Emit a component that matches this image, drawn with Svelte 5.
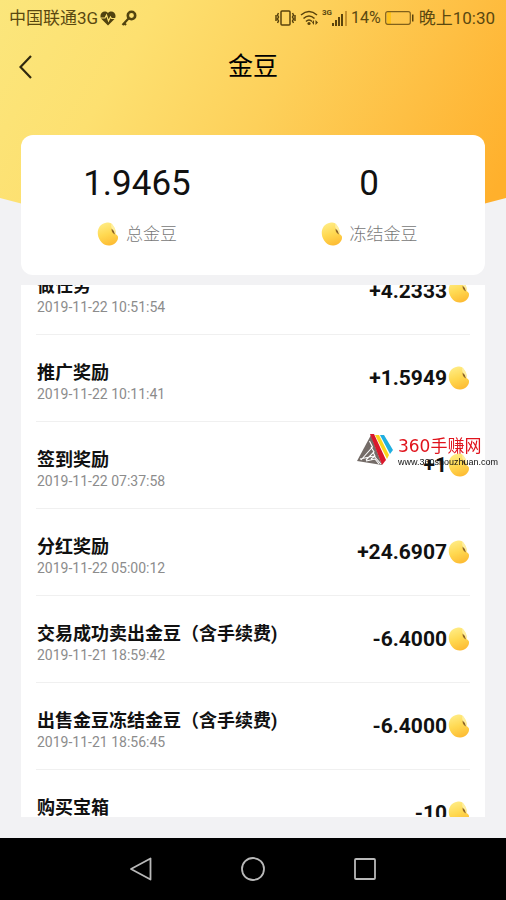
<script>
  const totals = [
    { value: "1.9465", label: "总金豆" },
    { value: "0", label: "冻结金豆" },
  ];

  const records = [
    { title: "做任务", time: "2019-11-22 10:51:54", amount: "+4.2333" },
    { title: "推广奖励", time: "2019-11-22 10:11:41", amount: "+1.5949" },
    { title: "签到奖励", time: "2019-11-22 07:37:58", amount: "+1" },
    { title: "分红奖励", time: "2019-11-22 05:00:12", amount: "+24.6907" },
    {
      title: "交易成功卖出金豆（含手续费)",
      time: "2019-11-21 18:59:42",
      amount: "-6.4000",
    },
    {
      title: "出售金豆冻结金豆（含手续费)",
      time: "2019-11-21 18:56:45",
      amount: "-6.4000",
    },
    { title: "购买宝箱", amount: "-10" },
  ];

  let list;

  // the list opens a little way down
  $effect(() => {
    list.scrollTop = 37;
  });
</script>

{#snippet bean()}
  <svg class="bean" viewBox="0 0 22 24" aria-hidden="true">
    <defs>
      <linearGradient id="beanFill" x1="0.3" y1="0" x2="0.6" y2="1">
        <stop offset="0" stop-color="#ffec86" />
        <stop offset="0.5" stop-color="#ffd951" />
        <stop offset="1" stop-color="#fdbb33" />
      </linearGradient>
    </defs>
    <path
      d="M9 .8C12 0 15 1 16 3.500C18 6 19 9 18.500 12C20 13 21.500 14 21 16C21 19 17 23.500 12.500 23.500C7 24 1.500 19 .8 12C.3 6 4 1.500 9 .8Z"
      fill="url(#beanFill)"
    />
    <path
      d="M14 2C17 3 19 8 18.500 12C15.500 11 14.500 8 14 2Z"
      fill="#fff3ae"
      opacity="0.800"
    />
    <path
      d="M14.500 6.500Q14.500 11 18 12.500Q17.500 8.500 14.500 6.500Z"
      fill="#8d6428"
    />
  </svg>
{/snippet}

<div class="page">
  <header>
    <div class="status">
      <span>中国联通3G</span>
      <svg class="heart" width="16" height="15" viewBox="0 0 16 15">
        <path
          d="M8 14.500L1.500 8C-2 3 4-2 8 2C12-2 18 3 14.500 8Z"
          fill="#51430f"
        />
        <path
          d="M1 7H5L6.500 4L8.500 10L10.500 6L11.500 7.500H15"
          fill="none"
          stroke="#fbe070"
          stroke-width="1.200"
        />
      </svg>
      <svg class="key" width="16" height="17" viewBox="0 0 16 17">
        <circle
          cx="10.500"
          cy="5.500"
          r="3.700"
          fill="none"
          stroke="#51430f"
          stroke-width="2.600"
        />
        <path
          d="M8 8L1.500 15M3 13L5 15"
          fill="none"
          stroke="#51430f"
          stroke-width="2.200"
        />
      </svg>
      <span class="fill"></span>
      <svg width="21" height="16" viewBox="0 0 21 16">
        <g fill="none" stroke="#5a430c" stroke-width="1.500">
          <rect x="6" y="1" width="9" height="14" rx="1" />
          <path
            d="M3.500 3L2.500 5L3.500 7L2.500 9L3.500 11L2.500 13M1 5V11M17.500 3L18.500 5L17.500 7L18.500 9L17.500 11L18.500 13M20 5V11"
          />
        </g>
      </svg>
      <svg class="wifi" width="19" height="16" viewBox="0 0 19 16">
        <g fill="none" stroke="#5a430c" stroke-width="1.600">
          <path d="M1 5Q9-2 17 5M3.500 8.500Q9 3.500 14.500 8.500M6 11.500Q9 8.500 12 11.500" />
        </g>
        <circle cx="9" cy="13.500" r="1.600" fill="#5a430c" />
        <path d="M14 10V15L12 12.500ZM15.500 10V15L18 12.500Z" fill="#5a430c" />
      </svg>
      <span class="cell">3G</span>
      <svg class="signal" width="16" height="15" viewBox="0 0 16 15">
        <path
          d="M0 12H2V15H0ZM3 9H5V15H3ZM6 6H8V15H6ZM9 3H11V15H9Z"
          fill="#5a430c"
        />
        <path d="M13 0H15V15H13Z" fill="#c8942f" />
      </svg>
      <span class="percent">14%</span>
      <svg class="battery" width="29" height="14" viewBox="0 0 29 14">
        <rect x="2" y="1" width="4" height="12" fill="#ffc21d" />
        <rect
          x="0.700"
          y="0.700"
          width="24.600"
          height="12.600"
          rx="2"
          fill="none"
          stroke="#80601b"
          stroke-width="1.200"
        />
        <path d="M27 3.500H28.500V10.500H27Z" fill="#5a430c" />
      </svg>
      <span>晚上10:30</span>
    </div>
    <div class="bar">
      <button class="back" aria-label="返回">
        <svg width="14" height="24" viewBox="0 0 14 24">
          <path
            d="M12 1L1.500 12L12 23"
            fill="none"
            stroke="#30290f"
            stroke-width="2.200"
          />
        </svg>
      </button>
      <h1>金豆</h1>
    </div>
  </header>

  <section class="card">
    {#each totals as total}
      <div class="total">
        <strong>{total.value}</strong>
        <span class="label">{@render bean()}{total.label}</span>
      </div>
    {/each}
  </section>

  <ul class="list" bind:this={list}>
    {#each records as record}
      <li>
        <div>
          <h2>{record.title}</h2>
          {#if record.time}
            <time>{record.time}</time>
          {/if}
        </div>
        <span class="amount">{record.amount}{@render bean()}</span>
      </li>
    {/each}
  </ul>

  <nav>
    <button aria-label="返回">
      <svg width="24" height="24" viewBox="0 0 24 24">
        <path d="M21.500 1.500V22.500L2 12Z" />
      </svg>
    </button>
    <button aria-label="主页">
      <svg width="24" height="24" viewBox="0 0 24 24">
        <circle cx="12" cy="12" r="11" />
      </svg>
    </button>
    <button aria-label="最近">
      <svg width="24" height="24" viewBox="0 0 24 24">
        <rect x="2" y="2" width="20" height="20" rx="1" />
      </svg>
    </button>
  </nav>

  <div class="mark">
    <svg width="36" height="32" viewBox="0 0 36 32">
      <path d="M14 1L0 27L25 31Z" fill="#746c68" />
      <path
        d="M12.500 7L15.500 13L4 26M14 13L17 18L9 26M16 18L18 22L14 25M3 25L17 22L24 30M9 27L18 25L22 30"
        fill="none"
        stroke="#fff"
        stroke-width="1.100"
      />
      <path d="M13 0H17L29 26L25 31Z" fill="#d9182b" />
      <path d="M18 1H22L32 21L30 25Z" fill="#fbd51c" />
      <path d="M23 1H27L36 16L33 20Z" fill="#20afe0" />
    </svg>
    <div>
      <p class="name">360手赚网</p>
      <p class="site">www.360shouzhuan.com</p>
    </div>
  </div>
</div>

<style>
  :global(body) {
    margin: 0;
  }
  .page {
    position: relative;
    display: flex;
    flex-direction: column;
    height: 100vh;
    overflow: hidden;
    background: #f2f2f4;
    color: #111;
    font-family: Roboto, "Noto Sans CJK SC", sans-serif;
  }
  header {
    flex: none;
    height: 264px;
    background: linear-gradient(
      120deg,
      #fbe67c 0%,
      #fde070 24%,
      #fdd05a 50%,
      #febf43 72%,
      #ffb02c 92%
    );
    clip-path: polygon(0 0, 100% 0, 100% 198px, 50% 100%, 0 198px);
  }
  .status {
    display: flex;
    align-items: center;
    height: 36px;
    padding: 0 11px 0 9px;
    color: #5a4810;
    font-size: 17px;
    line-height: 36px;
    white-space: nowrap;
  }
  .heart {
    margin-left: 2px;
  }
  .key {
    margin-left: 5px;
  }
  .fill {
    flex: 1;
  }
  .wifi {
    margin-left: 4px;
  }
  .cell {
    align-self: flex-start;
    margin-left: 3px;
    font-size: 8px;
    font-weight: 700;
    line-height: 26px;
  }
  .percent {
    margin-left: 3px;
    font-size: 16px;
  }
  .battery {
    margin: 0 5px 0 4px;
  }
  .bar {
    display: grid;
    grid-template-columns: 52px 1fr 52px;
    align-items: center;
    height: 60px;
  }
  button {
    display: flex;
    align-items: center;
    justify-content: center;
    padding: 0;
    border: 0;
    background: none;
  }
  .back {
    height: 56px;
  }
  h1 {
    margin: 0;
    color: #000;
    font-size: 25px;
    font-weight: 400;
    line-height: 62px;
    text-align: center;
  }
  .card {
    position: relative;
    flex: none;
    display: grid;
    grid-template-columns: 1fr 1fr;
    height: 140px;
    margin: -129px 21px 10px;
    border-radius: 12px;
    background: #fff;
  }
  .total {
    display: flex;
    flex-direction: column;
    align-items: center;
    padding-top: 28px;
  }
  .total strong {
    font-size: 35px;
    font-weight: 400;
    line-height: 42px;
  }
  .label {
    display: flex;
    align-items: center;
    gap: 7px;
    margin-top: 17px;
    color: #777;
    font-size: 17px;
    font-weight: 300;
    line-height: 24px;
  }
  .bean {
    flex: none;
    width: 22px;
    height: 24px;
  }
  .list {
    flex: 1;
    min-height: 0;
    margin: 0 21px 21px;
    padding: 0 15px;
    overflow-y: auto;
    scrollbar-width: none;
    background: #fff;
    list-style: none;
  }
  li {
    display: flex;
    justify-content: space-between;
    box-sizing: border-box;
    height: 87px;
    padding-left: 1px;
    border-bottom: 1px solid #f0f0f0;
  }
  li div {
    padding-top: 26px;
  }
  h2 {
    margin: 0;
    font-size: 18px;
    font-weight: 700;
    line-height: 24px;
  }
  time {
    display: block;
    color: #8c8c8c;
    font-size: 14px;
    line-height: 18px;
  }
  .amount {
    display: flex;
    align-items: center;
    gap: 1px;
    font-size: 21px;
    font-weight: 700;
    line-height: 24px;
  }
  nav {
    flex: none;
    display: flex;
    align-items: center;
    justify-content: center;
    height: 62px;
    background: #000;
  }
  nav button {
    width: 112px;
    height: 62px;
  }
  nav svg {
    fill: none;
    stroke: #b9b9b9;
    stroke-width: 1.800;
    stroke-linejoin: round;
  }
  .mark {
    position: absolute;
    top: 434px;
    right: 8px;
    display: flex;
    gap: 5px;
  }
  .mark p {
    margin: 0;
  }
  .name {
    color: #e0131c;
    font-family: "DejaVu Sans", "Noto Sans CJK SC", sans-serif;
    font-size: 17px;
    line-height: 24px;
  }
  .site {
    color: #111;
    font-family: "Liberation Sans", sans-serif;
    font-size: 9px;
    line-height: 8px;
  }
</style>
